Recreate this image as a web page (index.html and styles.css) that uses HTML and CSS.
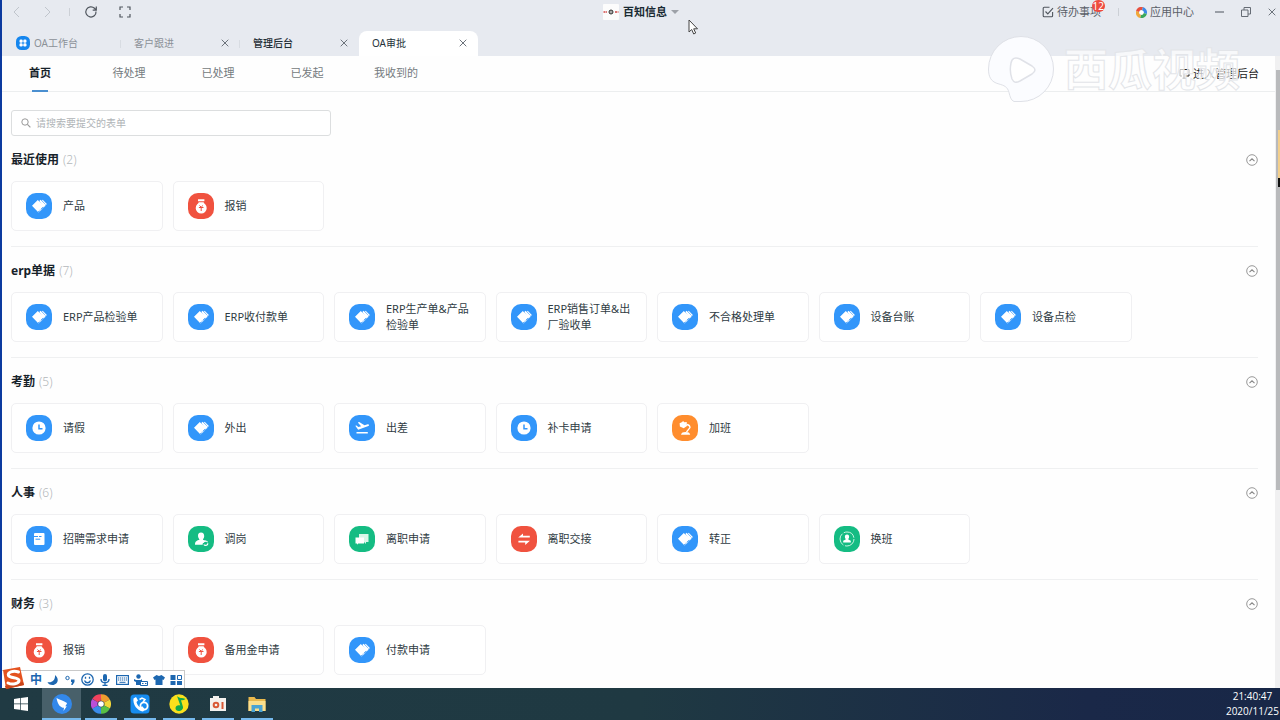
FILE: index.html
```html
<!DOCTYPE html>
<html lang="zh-CN">
<head>
<meta charset="utf-8">
<meta name="viewport" content="width=device-width, initial-scale=1">
<title>OA审批</title>
<link rel="stylesheet" href="styles.css">
</head>
<body>
<svg class="sprite" aria-hidden="true">
  <symbol id="i-form" viewBox="0 0 26 26"><path fill="#fff" d="M6 12.800 11.800 7l5.700 5.600v1.300h-1.200v1.400h-1.300v1.400h-1.300v1.400h-1.200L12 19z"/><path fill="#fff" d="M13.300 7.900 14.600 6.700l4.700 4.800v1.500h-1.200v1.100h-.6z"/><path fill="#fff" d="m15.900 7.300.8-.6 4.200 4.200-1.500 1.600v-1.300z"/><path stroke="#fff" stroke-width=".9" stroke-dasharray="1 .9" d="m12.800 19.300 6.500-6.500"/></symbol>
  <symbol id="i-money" viewBox="0 0 26 26"><path fill="#fff" d="M10 6.300h6.400v1.900H10zM10.800 9.200h4.800c.2.900.7 1.400 1.600 2.100a5.500 5.500 0 1 1-8 0c.9-.7 1.400-1.200 1.600-2.100z"/><path fill="none" stroke="#f0523f" stroke-width="1" d="m11.500 12.500 1.700 1.700 1.700-1.700M10.900 14.500h4.600M13.200 14v4"/></symbol>
  <symbol id="i-clock" viewBox="0 0 26 26"><circle cx="13" cy="13" r="6.600" fill="#fff"/><path fill="none" stroke="#3296fa" stroke-width="1.500" d="M13 9.500v4.200h3.500"/></symbol>
  <symbol id="i-plane" viewBox="0 0 26 26"><path fill="#fff" d="M7.500 17h11.300v1.400H7.500zM6.300 10.800l1.200-.3 1.800 1.500 2.800-.8-3.300-3.800 1.400-.4 5.300 3.200 3.300-.9c1.100-.3 1.900 1.200.6 1.700L9.200 14.700z"/></symbol>
  <symbol id="i-lamp" viewBox="0 0 26 26"><path fill="#fff" d="m7.600 8.200 2.600-1.300.8-.9 1.400 1.200 2.300-.3.300 4-3.300 2.300-3.800-1.700z"/><path fill="none" stroke="#fff" stroke-width="1.300" d="M15 9.500c2 .5 3 2 3 3.100L14.500 17"/><path fill="#fff" d="M9 19.800c.4-2 2-2.700 4.600-2.700s4.200.7 4.600 2.700z"/></symbol>
  <symbol id="i-doc" viewBox="0 0 26 26"><rect x="8" y="7" width="10.500" height="12" rx="1" fill="#fff"/><path stroke="#3296fa" stroke-width="1" d="M8 10.500h4M13 10.500h2.500M9.500 13.200h4.700"/></symbol>
  <symbol id="i-person" viewBox="0 0 26 26"><path fill="#fff" d="M13 6.500c2.200 0 3.300 1.600 3.200 3.700-.1 1.900-1 2.500-1.300 3.600 2 .6 3 .9 3.500 1.700-2.600 0-3.900 1.400-3.800 3.200H7c0-3.600 2-4.200 4.500-5-.2-1.100-1.400-1.700-1.500-3.700-.1-2 .9-3.500 3-3.500z"/><circle cx="17.600" cy="17.200" r="2.200" fill="none" stroke="#fff" stroke-width="1.100" stroke-dasharray="5 1.500"/></symbol>
  <symbol id="i-chat" viewBox="0 0 26 26"><path fill="#d8f7e9" d="M10 8h9.500v8H17v2l-2-2h-5z"/><path fill="#fff" d="M6.500 11.500H15v6H9.200L8 18.800v-1.300H6.500z"/></symbol>
  <symbol id="i-swap" viewBox="0 0 26 26"><path fill="#fff" d="M7.200 11.500 12 7.500v2.300h6.800v1.700zM18.900 14.800 14.200 18.900v-2.400H7.400v-1.700z"/></symbol>
  <symbol id="i-ring" viewBox="0 0 26 26"><circle cx="13" cy="13" r="7" fill="none" stroke="#c8f3df" stroke-width="1" stroke-dasharray="13 1.700"/><path fill="#fff" d="M13 8.500c1.700 0 2.200 1 2.100 2.400 0 1-.7 1.500-.8 2.500l2.500 1.300v1.800H9.200v-1.800l2.500-1.300c-.1-1-.8-1.500-.8-2.500-.1-1.400.4-2.400 2.100-2.400z"/></symbol>
  <symbol id="i-up" viewBox="0 0 12 12"><circle cx="6" cy="6" r="5.300" fill="none" stroke="#999" stroke-width="1"/><path fill="none" stroke="#888" stroke-width="1.100" d="M3.500 7.200 6 4.800l2.500 2.400"/></symbol>
  <symbol id="i-x" viewBox="0 0 8 8"><path fill="none" stroke="#6c737b" d="m.7.7 6.600 6.600M7.300.7.7 7.300"/></symbol>
</svg>

<div class="desktop">
  <div class="window">
    <header class="titlebar">
      <div class="tools">
        <button class="ico" aria-label="后退"><svg width="16" height="12" viewBox="0 0 16 12"><path fill="none" stroke="#c0c5cc" d="M10 1 5 6l5 5"/></svg></button>
        <button class="ico" aria-label="前进"><svg width="16" height="12" viewBox="0 0 16 12"><path fill="none" stroke="#c0c5cc" d="m6 1 5 5-5 5"/></svg></button>
        <span class="sep"></span>
        <button class="ico" aria-label="刷新"><svg width="14" height="14" viewBox="0 0 14 14"><path fill="none" stroke="#50565e" stroke-width="1.200" d="M12 6.500A5.100 5.100 0 1 1 10.500 3.300L12 4.800M12.300 1.500v3.600H8.700"/></svg></button>
        <button class="ico full" aria-label="全屏"><svg width="14" height="14" viewBox="0 0 14 14"><path fill="none" stroke="#50565e" stroke-width="1.200" d="M2 5V2h3M9 2h3v3M12 9v3H9M5 12H2V9"/></svg></button>
      </div>
      <button class="org">
        <svg width="16" height="16" viewBox="0 0 16 16"><rect width="16" height="16" rx="1" fill="#fcfcfc"/><path stroke="#d04545" stroke-width="1.600" stroke-dasharray="2 .6" d="M.5 8H4M12 8h3.500"/><circle cx="8" cy="8" r="2" fill="#aaa" stroke="#333"/></svg>
        <span>百知信息</span>
        <svg width="8" height="4" viewBox="0 0 8 4"><path fill="#9da1a8" d="M0 0h8L4 4z"/></svg>
      </button>
      <div class="actions">
        <button class="act todo">
          <svg width="12" height="12" viewBox="0 0 12 12"><path fill="none" stroke="#50565e" stroke-width="1.100" d="M7.500 1.300H2.200a1 1 0 0 0-1 1v7.400a1 1 0 0 0 1 1h7.400a1 1 0 0 0 1-1V6M3.500 5.500l2.300 2.400 5.200-5.700"/></svg>
          <span>待办事项</span><b class="badge">12</b>
        </button>
        <span class="sep"></span>
        <button class="act">
          <svg width="11" height="11" viewBox="0 0 11 11"><g fill="none" stroke-width="3.200"><path stroke="#e8503e" d="M1.500 4.500A4 4 0 0 1 6.500 1.600"/><path stroke="#3c8ae8" d="M6.500 1.600A4 4 0 0 1 9.300 6.500"/><path stroke="#3ba85b" d="M9.300 6.500A4 4 0 0 1 4.500 9.400"/><path stroke="#f0a83a" d="M4.500 9.400A4 4 0 0 1 1.500 4.500"/></g><circle cx="5.500" cy="5.500" r="2" fill="#fff"/></svg>
          <span>应用中心</span>
        </button>
        <div class="winctl">
          <button class="ico" aria-label="最小化"><svg width="10" height="10" viewBox="0 0 10 10"><path stroke="#666c75" stroke-width="1.200" d="M1 5h9"/></svg></button>
          <button class="ico" aria-label="还原"><svg width="10" height="10" viewBox="0 0 10 10"><path fill="none" stroke="#666c75" d="M.5 3h6.500v6.500H.5zM3 3V.500h6.500V7H7"/></svg></button>
          <button class="ico" aria-label="关闭"><svg width="8" height="8"><use href="#i-x"/></svg></button>
        </div>
      </div>
    </header>

    <div class="tabs">
      <div class="tab home"><svg width="14" height="14" viewBox="0 0 14 14"><rect width="14" height="14" rx="5.500" fill="#1586ee"/><g fill="#fff"><rect x="3.500" y="3.500" width="3.200" height="3.200" rx="1.200"/><rect x="7.300" y="3.500" width="3.200" height="3.200" rx="1.200"/><rect x="3.500" y="7.300" width="3.200" height="3.200" rx="1.200"/><rect x="7.300" y="7.300" width="3.200" height="3.200" rx="1.200"/></g></svg><span>OA工作台</span></div>
      <div class="tab"><span>客户跟进</span><button class="ico" aria-label="关闭"><svg width="8" height="8"><use href="#i-x"/></svg></button></div>
      <div class="tab dark"><span>管理后台</span><button class="ico" aria-label="关闭"><svg width="8" height="8"><use href="#i-x"/></svg></button></div>
      <div class="tab active"><span>OA审批</span><button class="ico" aria-label="关闭"><svg width="8" height="8"><use href="#i-x"/></svg></button></div>
    </div>

    <div class="page">
      <div class="view">
        <nav class="nav">
          <a class="on" href="#">首页</a><a href="#">待处理</a><a href="#">已处理</a><a href="#">已发起</a><a href="#">我收到的</a>
          <a class="admin" href="#"><svg width="11" height="11" viewBox="0 0 11 11"><path fill="none" stroke="#222" d="M3 8H1V1.500h9V8H6.500M3.500 10.200h3.500M5 6v4"/></svg>进入管理后台</a>
        </nav>
        <main class="content">
          <label class="search">
            <svg width="10" height="10" viewBox="0 0 10 10"><circle cx="4" cy="4" r="3.200" fill="none" stroke="#999"/><path stroke="#999" stroke-width="1.200" d="m6.400 6.400 3 3"/></svg>
            <input type="text" placeholder="请搜索要提交的表单" aria-label="请搜索要提交的表单">
          </label>

          <section class="group">
            <h2>最近使用 <i>(2)</i><button class="ico" aria-label="收起"><svg width="12" height="12"><use href="#i-up"/></svg></button></h2>
            <div class="cards">
              <button class="card"><svg class="blue"><use href="#i-form"/></svg><span>产品</span></button>
              <button class="card"><svg class="red"><use href="#i-money"/></svg><span>报销</span></button>
            </div>
          </section>
          <section class="group">
            <h2>erp单据 <i>(7)</i><button class="ico" aria-label="收起"><svg width="12" height="12"><use href="#i-up"/></svg></button></h2>
            <div class="cards">
              <button class="card"><svg class="blue"><use href="#i-form"/></svg><span>ERP产品检验单</span></button>
              <button class="card"><svg class="blue"><use href="#i-form"/></svg><span>ERP收付款单</span></button>
              <button class="card"><svg class="blue"><use href="#i-form"/></svg><span>ERP生产单&amp;产品检验单</span></button>
              <button class="card"><svg class="blue"><use href="#i-form"/></svg><span>ERP销售订单&amp;出厂验收单</span></button>
              <button class="card"><svg class="blue"><use href="#i-form"/></svg><span>不合格处理单</span></button>
              <button class="card"><svg class="blue"><use href="#i-form"/></svg><span>设备台账</span></button>
              <button class="card"><svg class="blue"><use href="#i-form"/></svg><span>设备点检</span></button>
            </div>
          </section>
          <section class="group">
            <h2>考勤 <i>(5)</i><button class="ico" aria-label="收起"><svg width="12" height="12"><use href="#i-up"/></svg></button></h2>
            <div class="cards">
              <button class="card"><svg class="blue"><use href="#i-clock"/></svg><span>请假</span></button>
              <button class="card"><svg class="blue"><use href="#i-form"/></svg><span>外出</span></button>
              <button class="card"><svg class="blue"><use href="#i-plane"/></svg><span>出差</span></button>
              <button class="card"><svg class="blue"><use href="#i-clock"/></svg><span>补卡申请</span></button>
              <button class="card"><svg class="orange"><use href="#i-lamp"/></svg><span>加班</span></button>
            </div>
          </section>
          <section class="group">
            <h2>人事 <i>(6)</i><button class="ico" aria-label="收起"><svg width="12" height="12"><use href="#i-up"/></svg></button></h2>
            <div class="cards">
              <button class="card"><svg class="blue"><use href="#i-doc"/></svg><span>招聘需求申请</span></button>
              <button class="card"><svg class="green"><use href="#i-person"/></svg><span>调岗</span></button>
              <button class="card"><svg class="green"><use href="#i-chat"/></svg><span>离职申请</span></button>
              <button class="card"><svg class="red"><use href="#i-swap"/></svg><span>离职交接</span></button>
              <button class="card"><svg class="blue"><use href="#i-form"/></svg><span>转正</span></button>
              <button class="card"><svg class="green"><use href="#i-ring"/></svg><span>换班</span></button>
            </div>
          </section>
          <section class="group">
            <h2>财务 <i>(3)</i><button class="ico" aria-label="收起"><svg width="12" height="12"><use href="#i-up"/></svg></button></h2>
            <div class="cards">
              <button class="card"><svg class="red"><use href="#i-money"/></svg><span>报销</span></button>
              <button class="card"><svg class="red"><use href="#i-money"/></svg><span>备用金申请</span></button>
              <button class="card"><svg class="blue"><use href="#i-form"/></svg><span>付款申请</span></button>
            </div>
          </section>
        </main>
      </div>
      <div class="scroll"><div class="thumb"></div></div>
    </div>

    <div class="ime">
      <svg width="23" height="24" viewBox="0 0 23 24"><path fill="#e4521f" d="m1 4 17-3 4 18L4 23z"/><path fill="#c8441a" d="m4 23 18-4-1-3L3 20z"/><path fill="none" stroke="#fff" stroke-width="3" stroke-linecap="round" d="M16.500 6C11 4 5 6.500 6.500 9.500S17 11 17 14.500 10 19 6 17"/></svg>
      <span class="zh">中</span>
      <svg width="12" height="12" viewBox="0 0 12 12"><path fill="#1d67b0" d="M8 1c5 4 2.500 10-2.500 10C3 11 1 10 .5 8 5 9 8.500 6 8 1z"/></svg>
      <svg width="12" height="12" viewBox="0 0 12 12"><circle cx="3.500" cy="4" r="1.700" fill="none" stroke="#1d67b0"/><path fill="#1d67b0" d="M7 5.500h3.500v2.500L8.500 11H7.200L8 8H7z"/></svg>
      <svg width="13" height="13" viewBox="0 0 13 13"><circle cx="6.500" cy="6.500" r="5.700" fill="none" stroke="#1d67b0" stroke-width="1.300"/><path fill="none" stroke="#1d67b0" stroke-width="1.300" d="M4.500 3.800v2M8.500 3.800v2M3.500 7.500c1 3 5 3 6 0"/></svg>
      <svg width="12" height="12" viewBox="0 0 12 12"><rect x="4" width="4" height="7.500" rx="2" fill="#1d67b0"/><path fill="none" stroke="#1d67b0" stroke-width="1.300" d="M2 5c0 5 8 5 8 0M6 9v2.500M3.500 11.400h5"/></svg>
      <svg width="13" height="12" viewBox="0 0 13 12"><rect x=".6" y="1.600" width="11.800" height="8.800" fill="none" stroke="#1d67b0" stroke-width="1.200"/><path stroke="#1d67b0" stroke-width="1.200" stroke-dasharray="1.300 .7" d="M2 4h9M2 6h9"/><path stroke="#1d67b0" d="M3.500 8.300h6"/></svg>
      <svg width="14" height="12" viewBox="0 0 14 12"><circle cx="4.500" cy="2.500" r="2.200" fill="#1d67b0"/><path fill="#1d67b0" d="m0 5 2 1h5l1-1v3H6v3H2V8L0 7z"/><path fill="#fff" stroke="#1d67b0" d="M6.500 7.500h7v4h-7z"/><path stroke="#1d67b0" d="M8 9.500h1.500M11 9.500h1.500"/></svg>
      <svg width="12" height="12" viewBox="0 0 12 12"><path fill="#1d67b0" d="M3.500 1 6 2l2.500-1L12 3.500 10.500 6l-1-.5V11h-7V5.500l-1 .5L0 3.500z"/></svg>
      <svg width="12" height="12" viewBox="0 0 12 12"><path fill="#1d67b0" d="M.5 1h5v5h-5zM.5 7h5v4h-5zM7 7h5v4H7z"/><path fill="none" stroke="#1d67b0" d="M7.500 1.500h4v4h-4z"/></svg>
    </div>
  </div>

  <footer class="taskbar">
    <button class="start" aria-label="开始"><svg width="14" height="14" viewBox="0 0 14 14"><path fill="#fff" d="m0 2 6-.9v5.500H0zM6.700 1 14 0v6.600H6.700zM0 7.300h6v5.500L0 12zM6.700 7.300H14V14l-7.300-1z"/></svg></button>
    <button class="app current" aria-label="钉钉"><svg width="20" height="20" viewBox="0 0 20 20"><circle cx="10" cy="10" r="10" fill="#3388ea"/><path fill="#fff" d="M4.500 4c3 1.800 7 2.600 10.500 5-.3 1.500-1 2.300-1.700 3.300h1.500L11.500 17l.5-3.300h-1.400c-3.600-1.500-5-4.300-6.100-9.700z"/></svg></button>
    <button class="app" aria-label="浏览器"><svg width="20" height="20" viewBox="0 0 20 20"><g fill="none" stroke-width="6.500"><path stroke="#f0425e" d="M4 6.500A7 7 0 0 1 10 3.500"/><path stroke="#ef9c2f" d="M10 3.500A6.500 6.500 0 0 1 16 7"/><path stroke="#f2d63a" d="M16 7a6.500 6.500 0 0 1 0 6"/><path stroke="#58c045" d="M16 13a6.500 6.500 0 0 1-6 3.500"/><path stroke="#3a8bea" d="M10 16.500A6.500 6.500 0 0 1 4 13"/><path stroke="#bb4fd8" d="M4 13a6.500 6.500 0 0 1 0-6.500"/></g><circle cx="10" cy="10" r="2.800" fill="#fff"/></svg></button>
    <button class="app" aria-label="通话"><svg width="20" height="20" viewBox="0 0 20 20"><rect x=".5" y=".5" width="19" height="19" rx="3.500" fill="#168cf0"/><path fill="#fff" d="M3.500 4.500 6 3l2 3.500-1.500 1.500c.5 2.500 2 4.300 3.800 5.300l2-1 2.700 3.200-2 2C7 17 2.500 10 3.500 4.500z"/><circle cx="14" cy="12" r="3.600" fill="none" stroke="#fff" stroke-width="1.800"/><path fill="none" stroke="#fff" stroke-width="1.500" d="M9.500 5.500 12 4l3 1.500-2 2.500"/></svg></button>
    <button class="app" aria-label="音乐"><svg width="20" height="20" viewBox="0 0 20 20"><circle cx="10" cy="10" r="9.700" fill="#fbe01c"/><path fill="#12a84e" d="M8 2c2 2.500 5.500 1.500 8.500 3-1.500 1.200-3 1.500-4.500 1.200l2 6.800c.5 4.500-7.500 5.500-7.500 1.300 0-2.600 2.500-3.600 4.800-2.800z"/></svg></button>
    <button class="app" aria-label="录屏"><svg width="20" height="20" viewBox="0 0 20 20"><path fill="#f4f1ee" d="M2 4h3V2h6v2h7v13H2z"/><circle cx="8" cy="11" r="3.300" fill="#d95835"/><circle cx="8" cy="11" r="1.300" fill="#f4f1ee"/><path stroke="#d95835" stroke-width="2" d="M14.500 8v7"/></svg></button>
    <button class="app" aria-label="文件资源管理器"><svg width="20" height="20" viewBox="0 0 20 20"><path fill="#eab94d" d="M1.500 3h6l1.500 2h9.500v12h-17z"/><path fill="#fbdf8d" d="M1.500 7h17v10h-17z"/><path fill="#4aa3d4" d="M4.500 11h11v7H12v-3.500H8V18H4.500z"/></svg></button>
    <div class="clock"><time>21:40:47</time><time>2020/11/25</time></div>
  </footer>

  <div class="mark" aria-hidden="true">
    <svg width="68" height="68" viewBox="0 0 68 68"><path fill="#fbfcff" stroke="#dfe1e7" d="M34 1.500a32.500 32.500 0 1 1 0 65h-7c-3-1-4-5-5-9-1.500-6-5-7-10-8.500C4 47 1.500 42 1.500 34A32.500 32.500 0 0 1 34 1.500z"/><path fill="#fff" stroke="#e0e2e8" stroke-width="1.500" d="M24 28c1-5 4-6 9-4l12 7c4 3 4 5 0 8l-12 7c-4 2-6 2-8-2-1.500-4-2-11-1-16z"/></svg>
    <span>西瓜视频</span>
  </div>
  <div class="dock"></div>
  <svg class="cursor" width="11" height="16" viewBox="0 0 11 16"><path fill="#fff" stroke="#444" d="M1 1v12l2.700-2.500 2 4.500 2-1-2-4.200h3.800z"/></svg>
</div>
</body>
</html>
```
FILE: styles.css
```css
* { box-sizing: border-box; }

body {
  margin: 0;
  font-family: "Noto Sans", "Noto Sans CJK SC", sans-serif;
  font-size: 11px;
  line-height: 16px;
  color: #303c44;
}

button {
  margin: 0;
  padding: 0;
  border: 0;
  background: none;
  font: inherit;
  color: inherit;
}

a { color: inherit; text-decoration: none; }
svg { display: block; flex: none; }
.sprite { position: absolute; width: 0; height: 0; }

.desktop {
  position: relative;
  display: flex;
  flex-direction: column;
  height: 100vh;
  overflow: hidden;
}

.window {
  position: relative;
  flex: 1;
  min-height: 0;
  display: flex;
  flex-direction: column;
  border-left: 2px solid #0c3a9f;
  background: #e7eaf0;
}

/* Title bar */
.titlebar {
  display: grid;
  grid-template-columns: 1fr auto 1fr;
  align-items: center;
  height: 24px;
  color: #5a6068;
}
.tools { display: flex; align-items: center; gap: 14px; padding-left: 7px; }
.tools .full { margin-left: 6px; }
.sep { width: 1px; height: 8px; background: #ccd0d6; }
.ico { display: inline-flex; align-items: center; justify-content: center; }
.org { display: flex; align-items: center; gap: 4px; font-weight: 700; color: #1a2a33; }
.actions { display: flex; align-items: center; justify-content: flex-end; gap: 17px; padding-right: 4px; }
.act { position: relative; display: flex; align-items: center; gap: 3px; }
.badge {
  position: absolute;
  top: -4px;
  right: -4px;
  padding: 0 1px;
  border-radius: 6px;
  background: #ee4b40;
  color: #fff;
  font-size: 10px;
  font-weight: 400;
  line-height: 12px;
}
.winctl { display: flex; align-items: center; gap: 17px; margin-left: 3px; }

/* Window tabs */
.tabs { display: flex; height: 32px; padding-top: 7px; color: #8b9198; font-size: 10px; }
.tab {
  display: flex;
  align-items: center;
  justify-content: space-between;
  width: 119px;
  padding: 0 11px 2px 13px;
  background: linear-gradient(#d8dce2, #d8dce2) right center / 1px 8px no-repeat;
}
.tab.home { justify-content: flex-start; gap: 4px; padding-left: 14px; }
.tab.dark { background: none; color: #1f2d36; font-weight: 500; }
.tab.active { border-radius: 8px 8px 0 0; background: #fff; color: #26323a; }

/* Page */
.page { flex: 1; min-height: 0; display: flex; background: #fefefe; }
.view { flex: 1; min-width: 0; overflow: hidden; }
.scroll { width: 5px; padding-top: 14px; background: #f0f0f1; }
.thumb { height: 68%; margin-left: 1px; background: #b9babc; }

.nav {
  display: flex;
  gap: 45px;
  height: 36px;
  padding: 0 16px;
  border-bottom: 1px solid #eceeef;
  color: #757b80;
}
.nav a { position: relative; min-width: 44px; line-height: 34px; text-align: center; }
.nav .on { color: #17222a; font-weight: 700; }
.nav .on::after {
  content: "";
  position: absolute;
  left: 14px;
  bottom: -1px;
  width: 16px;
  height: 2px;
  background: #4a8fd0;
}
.nav .admin { display: flex; align-items: center; gap: 3px; margin-left: auto; color: #222; }

.content { padding: 18px 17px 0 9px; }
.search {
  display: flex;
  align-items: center;
  gap: 5px;
  width: 320px;
  height: 26px;
  padding: 0 9px;
  border: 1px solid #dcdedf;
  border-radius: 3px;
  background: #fff;
}
.search input { flex: 1; min-width: 0; padding: 0; border: 0; outline: 0; background: none; font: inherit; font-size: 10px; }
.search input::placeholder { color: #b0b4b7; }

.group { padding: 15px 0; border-bottom: 1px solid #eff0f1; }
.group:last-child { border-bottom: 0; }
.group h2 {
  display: flex;
  align-items: center;
  gap: 4px;
  margin: 0 0 12px;
  font-size: 12px;
  line-height: 18px;
  color: #17222a;
}
.group h2 i { font-style: normal; font-weight: 300; color: #b4b8bb; }
.group h2 .ico { margin-left: auto; }

.cards { display: grid; grid-template-columns: repeat(7, 12.15%); gap: 10px; }
.card {
  display: flex;
  align-items: center;
  gap: 11px;
  height: 50px;
  padding: 0 14px;
  border: 1px solid #f0f0f2;
  border-radius: 5px;
  background: #fff;
  text-align: left;
}
.card svg { width: 26px; height: 26px; border-radius: 10px; }
.blue { background: #3296fa; }
.red { background: #f0523f; }
.orange { background: #ff8d2e; }
.green { background: #15bc83; }

/* Input method bar */
.ime {
  position: absolute;
  left: 0;
  bottom: 0;
  display: flex;
  align-items: center;
  gap: 5px;
  height: 18px;
  padding-right: 2px;
  border: 1px solid #c9c9c9;
  border-width: 1px 1px 0 0;
  background: #fff;
}
.ime svg:first-child { margin-top: -4px; }
.zh { color: #1d67b0; font-size: 12px; font-weight: 700; }

/* Taskbar */
.taskbar {
  display: flex;
  height: 32px;
  background: linear-gradient(90deg, #203a43, #1f3942 50%, #1a2848 85%, #182747);
}
.taskbar button { display: flex; align-items: center; justify-content: center; }
.start { width: 42px; }
.app {
  width: 39px;
  background: linear-gradient(#76b9ed, #76b9ed) center bottom / 32px 2px no-repeat;
}
.app.current { background-color: #48606a; background-size: 100% 2px; }
.clock {
  display: flex;
  flex-direction: column;
  align-items: center;
  justify-content: center;
  margin-left: auto;
  padding-right: 1px;
  color: #fff;
  font-family: "Open Sans", sans-serif;
  font-size: 10px;
  line-height: 15px;
}

/* Overlays */
.mark {
  position: absolute;
  top: 35px;
  right: 40px;
  display: flex;
  align-items: center;
  gap: 9px;
  pointer-events: none;
}
.mark span {
  color: rgba(255, 255, 255, 0.7);
  font-size: 44px;
  font-weight: 700;
  line-height: 64px;
  -webkit-text-stroke: 1px #e3e5e9;
}
.dock {
  position: absolute;
  top: 130px;
  right: 0;
  width: 2px;
  height: 57px;
  background: linear-gradient(#f3cf8c 85%, #111 85%);
}
.cursor { position: absolute; top: 19px; left: 688px; }
```
